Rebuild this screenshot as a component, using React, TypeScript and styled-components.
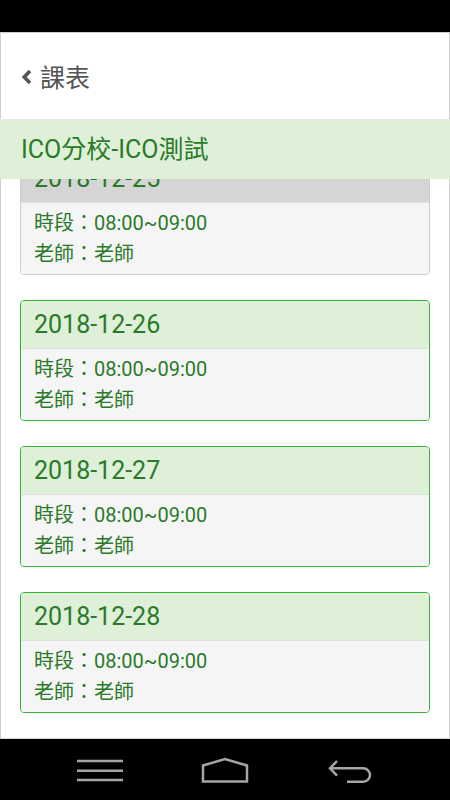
import React from "react";
import styled, { createGlobalStyle } from "styled-components";

const GlobalStyle = createGlobalStyle`
  html, body {
    margin: 0;
    padding: 0;
    background: #000;
  }
  body {
    font-family: Roboto, "Noto Sans CJK TC", sans-serif;
  }
  * { box-sizing: border-box; }
`;

const Screen = styled.div`
  width: 450px;
  height: 800px;
  display: flex;
  flex-direction: column;
  background: #000;
  overflow: hidden;
`;

const StatusBar = styled.div`
  height: 32px;
  flex: none;
  background: #000;
`;

const Header = styled.header`
  height: 87px;
  flex: none;
  background: #fff;
  border: 1px solid #cfcfcf;
  border-bottom: none;
  display: flex;
  align-items: center;
  padding: 0 0 0 20px;
  gap: 8px;
  color: #555;
  font-size: 25px;
  font-family: Roboto, "Noto Sans CJK TC", sans-serif;
`;

const Chevron = styled.svg`
  width: 11px;
  height: 16px;
  flex: none;
  margin-top: 1px;
`;

const Band = styled.div`
  height: 60px;
  flex: none;
  background: #dff0d8;
  border-top: 1px solid #e6ebe4;
  display: flex;
  align-items: center;
  padding: 0 0 0 21px;
  color: #2a7a2a;
  font-size: 25px;
  line-height: 1;
`;

const List = styled.div`
  flex: 1;
  background: #fff;
  border: 1px solid #cfcfcf;
  border-top: none;
  overflow: hidden;
  display: flex;
  flex-direction: column;
  gap: 25px;
  padding: 0 19px;
`;

const Card = styled.div<{ $past?: boolean; $offset?: number }>`
  flex: none;
  height: 121px;
  border: 1px solid ${(p) => (p.$past ? "#cccccc" : "#34b434")};
  border-radius: 4px;
  overflow: hidden;
  display: flex;
  flex-direction: column;
  margin-top: ${(p) => p.$offset ?? 0}px;
`;

const CardHead = styled.div<{ $past?: boolean }>`
  height: 48px;
  flex: none;
  background: ${(p) => (p.$past ? "#d5d5d5" : "#dff0d8")};
  border-bottom: 1px solid #e0e0e0;
  display: flex;
  align-items: center;
  padding: 0 0 0 13px;
  color: #2a7a2a;
  font-size: 25px;
  line-height: 1;
`;

const CardBody = styled.div`
  flex: 1;
  background: #f5f5f5;
  padding: 5px 0 0 13px;
  color: #2a7a2a;
  font-size: 20px;
  line-height: 31px;
`;

const NavBar = styled.nav`
  height: 61px;
  flex: none;
  background: #000;
  display: flex;
  align-items: center;
  gap: 75px;
  padding: 0 0 0 75px;
`;

const NavIcon = styled.svg`
  width: 50px;
  height: 30px;
  flex: none;
`;

const sessions = [
  { date: "2018-12-25", past: true },
  { date: "2018-12-26" },
  { date: "2018-12-27" },
  { date: "2018-12-28" },
];

export default function App() {
  return (
    <>
      <GlobalStyle />
      <Screen>
        <StatusBar />
        <Header>
          <Chevron viewBox="0 0 11 16">
            <path d="M9 2 L3.2 8 L9 14" fill="none" stroke="#555" strokeWidth="3.6" />
          </Chevron>
          <span>課表</span>
        </Header>
        <Band>ICO分校-ICO測試</Band>
        <List>
          {sessions.map((s, i) => (
            <Card key={s.date} $past={s.past} $offset={i === 0 ? -25 : 0}>
              <CardHead $past={s.past}>{s.date}</CardHead>
              <CardBody>
                <div>時段：08:00~09:00</div>
                <div>老師：老師</div>
              </CardBody>
            </Card>
          ))}
        </List>
        <NavBar>
          <NavIcon viewBox="0 0 50 30">
            <g stroke="#a6a6a6" strokeWidth="2.5">
              <line x1="2" y1="6" x2="48" y2="6" />
              <line x1="2" y1="15.7" x2="48" y2="15.7" />
              <line x1="2" y1="25" x2="48" y2="25" />
            </g>
          </NavIcon>
          <NavIcon viewBox="0 0 50 30">
            <path d="M3 26.5 L3 10.5 L25 4 L47 10.5 L47 26.5 Z" fill="none" stroke="#a6a6a6" strokeWidth="2.5" strokeLinejoin="miter" />
          </NavIcon>
          <NavIcon viewBox="0 0 50 30">
            <path d="M12 6 L5 13.3 L12 20.6 M5 13.3 H38.3 A6.7 6.7 0 0 1 38.3 26.7 H22" fill="none" stroke="#a6a6a6" strokeWidth="2.5" />
          </NavIcon>
        </NavBar>
      </Screen>
    </>
  );
}
